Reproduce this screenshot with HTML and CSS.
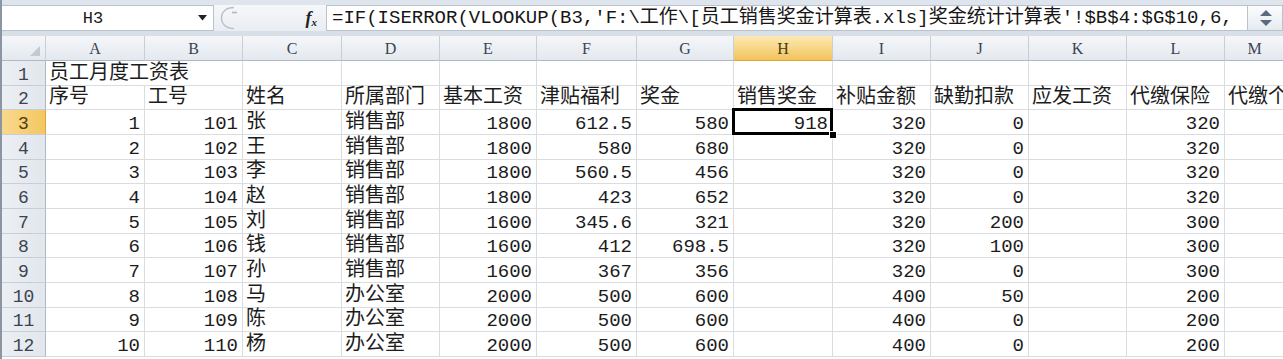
FILE: index.html
```html
<!DOCTYPE html>
<html lang="zh-CN">
<head>
<meta charset="utf-8">
<title>员工月度工资表</title>
<link rel="stylesheet" href="styles.css">
</head>
<body>
<div class="app">
  <div class="topstrip"></div>
  <div class="fbar">
    <div class="namebox">
      <span class="nb-text">H3</span>
      <svg class="nb-arrow" width="9" height="6" viewBox="0 0 9 6"><path d="M0 0H9L4.5 5.5Z" fill="#222"/></svg>
    </div>
    <div class="handle">
      <svg width="30" height="26" viewBox="0 0 30 26"><path d="M16 2.5C8 2.5 3.5 7 3.5 13S8 23.5 16 23.5" fill="none" stroke="#b8c0ca" stroke-width="1.4"/><path d="M14 7.5H19" stroke="#b0b8c2" stroke-width="1.6"/></svg>
    </div>
    <div class="fx"><span class="fx-f">f</span><span class="fx-x">x</span></div>
    <div class="formula">=IF(ISERROR(VLOOKUP(B3,'F:\工作\[员工销售奖金计算表.xls]奖金统计计算表'!$B$4:$G$10,6,</div>
    <div class="spin">
      <svg width="16" height="22" viewBox="0 0 16 22"><path d="M2 9L8 3L14 9Z" fill="#5a6a80"/><path d="M2 13L8 19L14 13Z" fill="#5a6a80"/></svg>
    </div>
  </div>
  <div class="gap"></div>
  <div class="grid">
    <div class="ch corner"><svg width="10" height="10" viewBox="0 0 10 10"><path d="M10 0V10H0Z" fill="#c2c9d2"/></svg></div>
    <div class="ch">A</div><div class="ch">B</div><div class="ch">C</div><div class="ch">D</div><div class="ch">E</div><div class="ch">F</div><div class="ch">G</div><div class="ch hl">H</div><div class="ch">I</div><div class="ch">J</div><div class="ch">K</div><div class="ch">L</div><div class="ch">M</div>

    <div class="rh">1</div><div class="c t span2">员工月度工资表</div><div class="c"></div><div class="c"></div><div class="c"></div><div class="c"></div><div class="c"></div><div class="c"></div><div class="c"></div><div class="c"></div><div class="c"></div><div class="c"></div><div class="c"></div>

    <div class="rh">2</div><div class="c t">序号</div><div class="c t">工号</div><div class="c t">姓名</div><div class="c t">所属部门</div><div class="c t">基本工资</div><div class="c t">津贴福利</div><div class="c t">奖金</div><div class="c t">销售奖金</div><div class="c t">补贴金额</div><div class="c t">缺勤扣款</div><div class="c t">应发工资</div><div class="c t">代缴保险</div><div class="c t">代缴个人所得税</div>

    <div class="rh hl">3</div><div class="c n">1</div><div class="c n">101</div><div class="c t">张</div><div class="c t">销售部</div><div class="c n">1800</div><div class="c n">612.5</div><div class="c n">580</div><div class="c n sel">918</div><div class="c n">320</div><div class="c n">0</div><div class="c"></div><div class="c n">320</div><div class="c"></div>

    <div class="rh">4</div><div class="c n">2</div><div class="c n">102</div><div class="c t">王</div><div class="c t">销售部</div><div class="c n">1800</div><div class="c n">580</div><div class="c n">680</div><div class="c"></div><div class="c n">320</div><div class="c n">0</div><div class="c"></div><div class="c n">320</div><div class="c"></div>

    <div class="rh">5</div><div class="c n">3</div><div class="c n">103</div><div class="c t">李</div><div class="c t">销售部</div><div class="c n">1800</div><div class="c n">560.5</div><div class="c n">456</div><div class="c"></div><div class="c n">320</div><div class="c n">0</div><div class="c"></div><div class="c n">320</div><div class="c"></div>

    <div class="rh">6</div><div class="c n">4</div><div class="c n">104</div><div class="c t">赵</div><div class="c t">销售部</div><div class="c n">1800</div><div class="c n">423</div><div class="c n">652</div><div class="c"></div><div class="c n">320</div><div class="c n">0</div><div class="c"></div><div class="c n">320</div><div class="c"></div>

    <div class="rh">7</div><div class="c n">5</div><div class="c n">105</div><div class="c t">刘</div><div class="c t">销售部</div><div class="c n">1600</div><div class="c n">345.6</div><div class="c n">321</div><div class="c"></div><div class="c n">320</div><div class="c n">200</div><div class="c"></div><div class="c n">300</div><div class="c"></div>

    <div class="rh">8</div><div class="c n">6</div><div class="c n">106</div><div class="c t">钱</div><div class="c t">销售部</div><div class="c n">1600</div><div class="c n">412</div><div class="c n">698.5</div><div class="c"></div><div class="c n">320</div><div class="c n">100</div><div class="c"></div><div class="c n">300</div><div class="c"></div>

    <div class="rh">9</div><div class="c n">7</div><div class="c n">107</div><div class="c t">孙</div><div class="c t">销售部</div><div class="c n">1600</div><div class="c n">367</div><div class="c n">356</div><div class="c"></div><div class="c n">320</div><div class="c n">0</div><div class="c"></div><div class="c n">300</div><div class="c"></div>

    <div class="rh">10</div><div class="c n">8</div><div class="c n">108</div><div class="c t">马</div><div class="c t">办公室</div><div class="c n">2000</div><div class="c n">500</div><div class="c n">600</div><div class="c"></div><div class="c n">400</div><div class="c n">50</div><div class="c"></div><div class="c n">200</div><div class="c"></div>

    <div class="rh">11</div><div class="c n">9</div><div class="c n">109</div><div class="c t">陈</div><div class="c t">办公室</div><div class="c n">2000</div><div class="c n">500</div><div class="c n">600</div><div class="c"></div><div class="c n">400</div><div class="c n">0</div><div class="c"></div><div class="c n">200</div><div class="c"></div>

    <div class="rh">12</div><div class="c n">10</div><div class="c n">110</div><div class="c t">杨</div><div class="c t">办公室</div><div class="c n">2000</div><div class="c n">500</div><div class="c n">600</div><div class="c"></div><div class="c n">400</div><div class="c n">0</div><div class="c"></div><div class="c n">200</div><div class="c"></div>
  </div>
</div>
</body>
</html>
```
FILE: styles.css
```css
html, body {
  margin: 0;
  padding: 0;
  background: #fff;
}
.app {
  width: 1283px;
  height: 359px;
  overflow: hidden;
  box-sizing: border-box;
  border-left: 2px solid #8c96a3;
  font-family: "Liberation Mono", "Noto Sans CJK SC", monospace;
  color: #151515;
}
.topstrip {
  height: 5px;
  background: #dfe5ec;
}
.fbar {
  height: 26px;
  display: flex;
  align-items: stretch;
  background: linear-gradient(#f6f7f9, #e9edf2);
}
.namebox {
  width: 212px;
  box-sizing: border-box;
  background: #fff;
  border: 1px solid #b9c3cf;
  border-left: none;
  display: flex;
  align-items: center;
  position: relative;
}
.nb-text {
  flex: 1;
  text-align: center;
  font-size: 17px;
  padding-right: 14px;
  color: #1a1a1a;
}
.nb-arrow {
  margin-right: 6px;
}
.handle {
  width: 30px;
  display: flex;
  align-items: center;
  margin-left: 4px;
}
.fx {
  width: 78px;
  display: flex;
  align-items: center;
  justify-content: flex-end;
  padding-right: 9px;
  box-sizing: border-box;
  font-family: "Liberation Serif", serif;
  font-style: italic;
  font-weight: bold;
  color: #222;
}
.fx-f {
  font-size: 18px;
}
.fx-x {
  font-size: 11px;
  margin-top: 7px;
}
.formula {
  flex: 1;
  background: #fff;
  border: 1px solid #b9c3cf;
  border-right: none;
  box-sizing: border-box;
  font-size: 19px;
  line-height: 24px;
  padding-left: 5px;
  white-space: nowrap;
  overflow: hidden;
  color: #161616;
}
.spin {
  width: 36px;
  box-sizing: border-box;
  background: linear-gradient(#fbfcfd, #e6ebf1);
  border: 1px solid #b9c3cf;
  display: flex;
  align-items: center;
  padding-left: 10px;
}
.gap {
  height: 5px;
  background: #d8dfe7;
}
.grid {
  display: grid;
  grid-template-columns: 44px 99px 98px 99px 98px 97px 100px 97px 99px 98px 98px 98px 98px 60px;
  grid-template-rows: 25px repeat(12, 24.67px);
}
.ch {
  background: linear-gradient(#f4f6f9, #e4e9ef);
  border-right: 1px solid #c6ced8;
  border-bottom: 1px solid #aeb9c6;
  font-family: "Liberation Serif", serif;
  font-size: 16px;
  color: #3a4452;
  display: flex;
  align-items: center;
  justify-content: center;
  padding-top: 1px;
  box-sizing: border-box;
}
.corner {
  justify-content: flex-end;
  align-items: flex-end;
  padding: 0 5px 4px 0;
}
.rh {
  background: linear-gradient(90deg, #eceff3, #e2e7ed);
  border-right: 1px solid #aeb9c6;
  border-bottom: 1px solid #c6ced8;
  font-size: 18px;
  color: #3a4452;
  display: flex;
  align-items: flex-end;
  justify-content: center;
  line-height: 20px;
  box-sizing: border-box;
}
.ch.hl {
  background: linear-gradient(#fbe9b4, #f3c35c);
  border-bottom-color: #e0a53a;
  color: #4a3a10;
}
.rh.hl {
  background: linear-gradient(90deg, #f8d98c, #f3c862);
  border-right-color: #e0a53a;
  color: #4a3a10;
}
.c {
  border-right: 1px solid #dadcdf;
  border-bottom: 1px solid #dadcdf;
  box-sizing: border-box;
  display: flex;
  align-items: flex-end;
  padding: 0 3px 0 3px;
  white-space: nowrap;
  font-size: 19px;
  line-height: 20px;
  min-width: 0;
  color: #1c1c1c;
}
.t {
  font-size: 20px;
  line-height: 23px;
}
.n {
  justify-content: flex-end;
  padding-right: 4px;
}
.span2 {
  grid-column: span 2;
}
.sel {
  position: relative;
  z-index: 2;
}
.sel::before {
  content: "";
  position: absolute;
  left: -2px;
  top: -2px;
  right: -1px;
  bottom: -1px;
  border: 3px solid #000;
  pointer-events: none;
}
.sel::after {
  content: "";
  position: absolute;
  right: -5px;
  bottom: -5px;
  width: 6px;
  height: 6px;
  background: #000;
  border: 1px solid #fff;
}
```
